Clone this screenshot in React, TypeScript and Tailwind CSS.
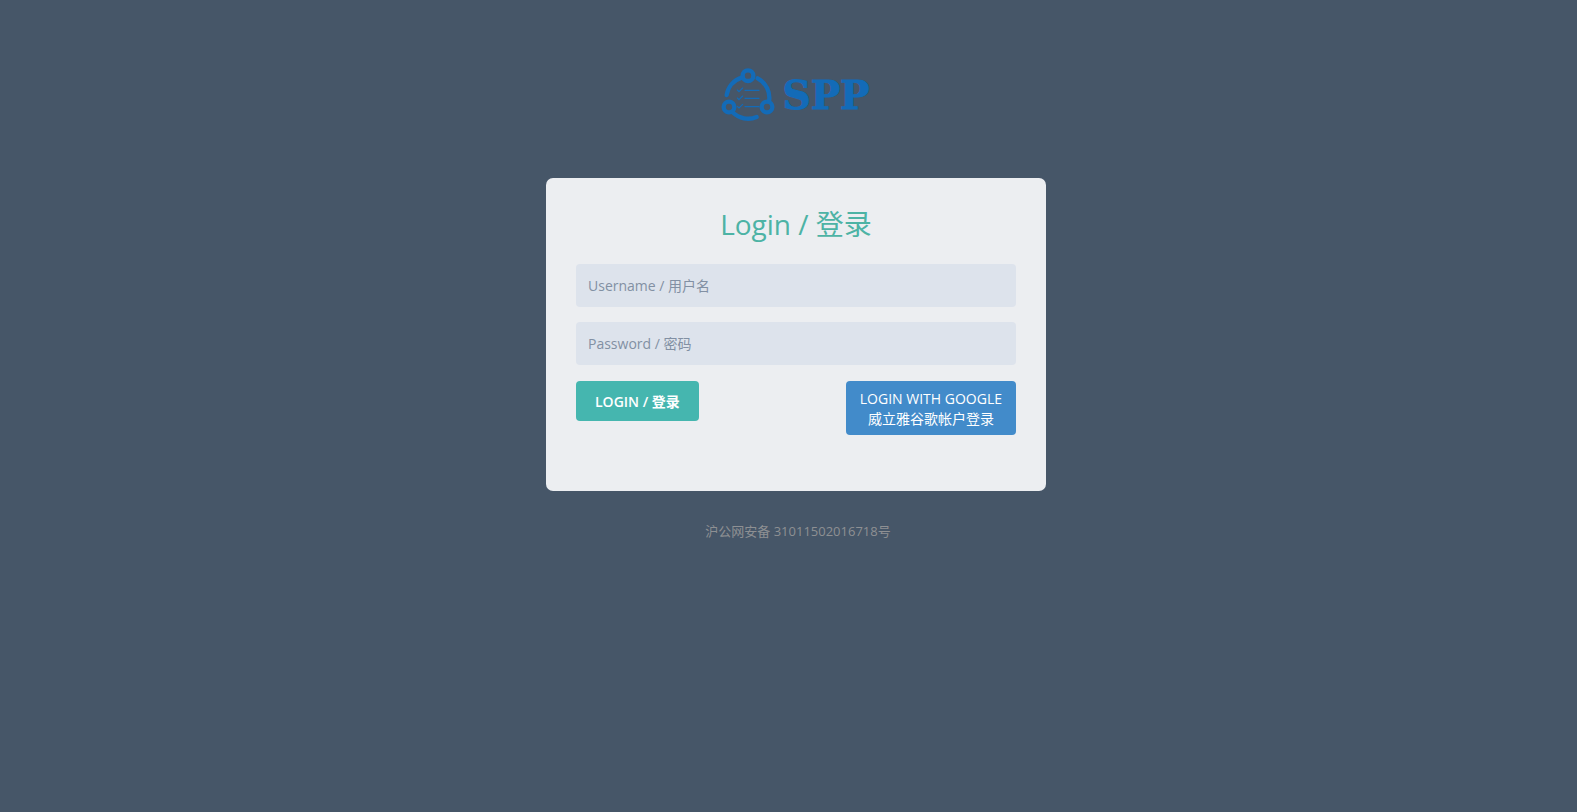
import React from "react";

function LogoMark() {
  return (
    <svg
      viewBox="0 0 192 192"
      className="h-16 w-16"
      fill="none"
      stroke="#136bb8"
      strokeLinecap="round"
      aria-hidden="true"
    >
      <g strokeWidth="13">
        <circle cx="99" cy="41" r="16" />
        <circle cx="42" cy="135" r="16" />
        <circle cx="156" cy="135" r="16" />
      </g>
      <g strokeWidth="13">
        <path d="M35 99 A66 66 0 0 1 80 47" />
        <path d="M128 49 A66 66 0 0 1 162 119" />
        <path d="M53 151 A66 66 0 0 0 125 165" />
      </g>
      <g strokeWidth="3.5">
        <path d="M67 84 L72 89 L83 78" />
        <path d="M67 108 L72 113 L83 102" />
        <path d="M67 133 L72 138 L83 127" />
        <path d="M90 85 H132" />
        <path d="M90 109 H132" />
        <path d="M90 134 H132" />
      </g>
    </svg>
  );
}

const inputClass =
  "block h-[43px] w-full rounded-sm bg-[#dde3ec] px-3 text-sm text-[#8290a3] outline-none placeholder:text-[#8290a3] placeholder:opacity-100";

export default function App() {
  return (
    <div className="flex min-h-screen flex-col items-center bg-[#465668] pb-5 pl-[15px] font-['Open_Sans','Noto_Sans_CJK_SC',sans-serif]">
      <a href="#" aria-label="SPP" className="mt-[62px] flex h-16 items-center pr-2">
        <LogoMark />
        <span className="ml-1 pt-0.5 font-['DejaVu_Serif',serif] text-[39px] leading-none font-bold text-[#136bb8] [-webkit-text-stroke:1px_#136bb8]">
          SPP
        </span>
      </a>

      <main className="mt-[52px] w-full max-w-[500px] rounded-[7px] bg-[#eceef1] px-[30px] pt-[26px] pb-14">
        <form onSubmit={(e) => e.preventDefault()}>
          <h1 className="mb-5 text-center text-[28px] leading-10 font-normal text-[#4db3a5]">
            Login / 登录
          </h1>
          <div className="flex flex-col gap-[15px]">
            <input
              className={inputClass}
              type="text"
              name="username"
              autoComplete="off"
              aria-label="Username / 用户名"
              placeholder="Username / 用户名"
            />
            <input
              className={inputClass}
              type="password"
              name="password"
              autoComplete="off"
              aria-label="Password / 密码"
              placeholder="Password / 密码"
            />
          </div>
          <div className="mt-4 flex items-start justify-between">
            <button
              type="submit"
              className="h-10 rounded-sm bg-[#45b6af] px-[19px] pt-0.5 text-sm font-semibold text-white"
            >
              LOGIN / 登录
            </button>
            <button
              type="button"
              className="rounded-sm bg-[#428bca] px-[14px] pt-2 pb-1.5 text-center text-sm leading-5 text-white"
            >
              LOGIN WITH GOOGLE
              <br />
              威立雅谷歌帐户登录
            </button>
          </div>
        </form>
      </main>

      <footer className="mt-[30px] pl-1 text-[13px] leading-5 text-[#8e9093]">
        沪公网安备 31011502016718号
      </footer>
    </div>
  );
}
